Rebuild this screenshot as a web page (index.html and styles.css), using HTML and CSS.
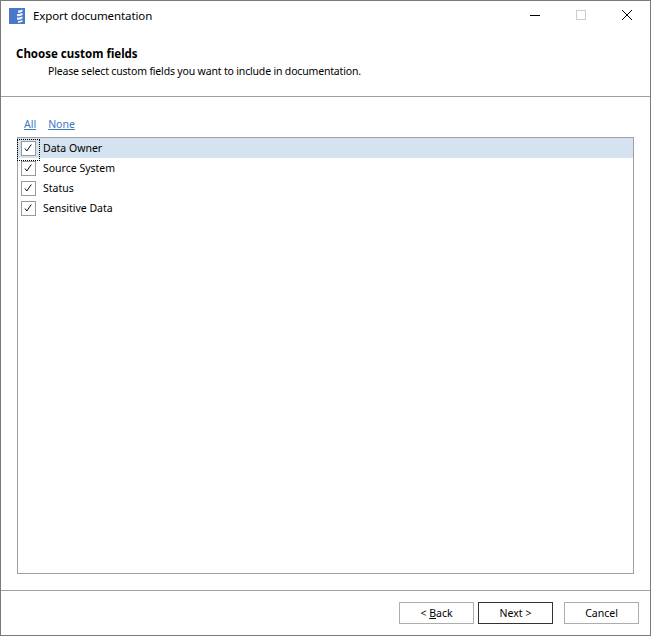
FILE: index.html
```html
<!DOCTYPE html>
<html lang="en">
<head>
<meta charset="utf-8">
<title>Export documentation</title>
<link rel="stylesheet" href="styles.css">
</head>
<body>
<div class="window">
  <div class="titlebar">
    <svg class="app-icon" width="16" height="16" viewBox="0 0 16 16">
      <rect width="16" height="16" fill="#4a78c8"/>
      <path d="M9 2.500 C10.500 2.500 12.500 2 13.500 1.500 V3.500 C12.500 4.500 10.500 4.800 9 4.800Z M8 6 C10 6 12.500 5.500 13.500 5 V7 C12.500 8 10 8.300 8 8.300Z M8 9.500 C10 9.500 12.500 9 13.500 8.500 V10.500 C12.500 11.500 10 11.800 8 11.800Z M9 13 C10.500 13 12.500 12.500 13.500 12 V13.500 C12.500 14.500 10.500 14.800 9 14.800Z" fill="#f2f6fc"/>
    </svg>
    <span class="title">Export documentation</span>
    <div class="controls">
      <svg class="ctl" width="46" height="30" viewBox="0 0 46 30"><path d="M18 14.500H28" stroke="#000" fill="none"/></svg>
      <svg class="ctl" width="46" height="30" viewBox="0 0 46 30"><rect x="18.500" y="9.500" width="9" height="9" stroke="#ccc" fill="none"/></svg>
      <svg class="ctl" width="46" height="30" viewBox="0 0 46 30"><path d="M18 9L28 19M28 9L18 19" stroke="#000" fill="none"/></svg>
    </div>
  </div>
  <header class="header">
    <div class="heading">Choose custom fields</div>
    <div class="sub">Please select custom fields you want to include in documentation.</div>
  </header>
  <main class="content">
    <div class="links"><a href="#" class="all">All</a><a href="#">None</a></div>
    <ul class="list">
      <li class="item selected"><span class="box focus"><svg width="11" height="11" viewBox="0 0 11 11"><path d="M2 5.500L3.800 8L8.300 1.500" stroke="#111" fill="none"/></svg></span>Data Owner</li>
      <li class="item"><span class="box"><svg width="11" height="11" viewBox="0 0 11 11"><path d="M2 5.500L3.800 8L8.300 1.500" stroke="#111" fill="none"/></svg></span>Source System</li>
      <li class="item"><span class="box"><svg width="11" height="11" viewBox="0 0 11 11"><path d="M2 5.500L3.800 8L8.300 1.500" stroke="#111" fill="none"/></svg></span>Status</li>
      <li class="item"><span class="box"><svg width="11" height="11" viewBox="0 0 11 11"><path d="M2 5.500L3.800 8L8.300 1.500" stroke="#111" fill="none"/></svg></span>Sensitive Data</li>
    </ul>
  </main>
  <footer class="footer">
    <button class="btn">&lt; <u>B</u>ack</button>
    <button class="btn primary">Next &gt;</button>
    <button class="btn cancel">Cancel</button>
  </footer>
</div>
</body>
</html>
```
FILE: styles.css
```css
* { box-sizing: border-box; }
html, body { margin: 0; padding: 0; }
body {
  width: 651px;
  height: 636px;
  overflow: hidden;
  background: #fff;
  font-family: "Noto Sans", "Open Sans", sans-serif;
  font-size: 10.500px;
  color: #000;
}
.window {
  width: 651px;
  height: 636px;
  border: 1px solid #7a7a7a;
  display: flex;
  flex-direction: column;
  background: #fff;
}
.titlebar {
  height: 30px;
  display: flex;
  align-items: center;
  padding-left: 8px;
  flex: none;
}
.app-icon { flex: none; margin-top: -1px; }
.title { margin-left: 8px; margin-bottom: 2px; font-size: 11.500px; letter-spacing: -0.100px; color: #000; }
.controls { margin-left: auto; display: flex; }
.ctl { display: block; }
.header {
  height: 66px;
  flex: none;
  border-bottom: 1px solid #a0a0a0;
  padding: 15px 0 0 15px;
}
.heading { font-weight: 700; font-size: 11.500px; line-height: 15px; }
.sub { margin-left: 32px; line-height: 15px; margin-top: 3px; letter-spacing: -0.170px; }
.content {
  flex: 1;
  min-height: 0;
  display: flex;
  flex-direction: column;
  padding: 0 16px 16px;
}
.links { height: 40px; padding: 20px 0 0 7px; line-height: 15px; flex: none; }
.links a { color: #3a78c6; text-decoration: underline; margin-right: 12px; }
.list {
  flex: 1;
  margin: 0;
  padding: 0;
  list-style: none;
  border: 1px solid #a0a0a0;
}
.item {
  height: 20px;
  display: flex;
  align-items: center;
  color: #000;
  padding-bottom: 1px;
}
.selected { background: #d5e3f1; }
.box {
  width: 15px;
  height: 15px;
  margin: 1px 7px 0 3px;
  border: 1px solid #9a9a9a;
  background: #fff;
  position: relative;
  display: flex;
  align-items: center;
  justify-content: center;
  flex: none;
}
.focus::after {
  content: "";
  position: absolute;
  left: -5px;
  top: -3px;
  width: 21px;
  height: 20px;
  border: 1px dotted #000;
}
.footer {
  height: 45px;
  flex: none;
  border-top: 1px solid #a0a0a0;
  display: flex;
  padding: 11px 11px 0 0;
  justify-content: flex-end;
  align-items: flex-start;
  gap: 4px;
}
.btn {
  width: 75px;
  height: 22px;
  padding: 0;
  border: 1px solid #adadad;
  background: #fff;
  font: inherit;
  color: #000;
}
.primary { border-color: #333; }
.cancel { margin-left: 7px; }
```
